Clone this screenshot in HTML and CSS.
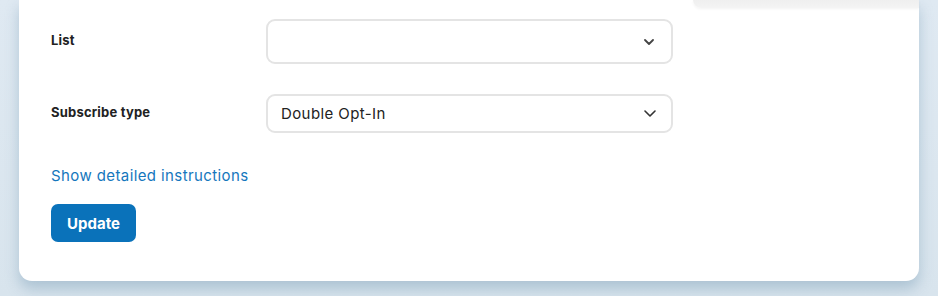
FILE: index.html
```html
<!DOCTYPE html>
<html>
<head>
<meta charset="utf-8">
<link rel="stylesheet" href="styles.css">
</head>
<body>
<div class="page">
  <div class="card">
    <div class="top-panel"></div>
    <div class="row row-list">
      <label class="label">List</label>
      <div class="select select-tall">
        <span class="value"></span>
        <svg class="chev" width="10" height="6" viewBox="0 0 10 6"><path d="M1 1l4 4 4-4" fill="none" stroke="#444" stroke-width="1.8" stroke-linecap="round" stroke-linejoin="round"/></svg>
      </div>
    </div>
    <div class="row row-type">
      <label class="label">Subscribe type</label>
      <div class="select">
        <span class="value">Double Opt-In</span>
        <svg class="chev" width="12" height="7" viewBox="0 0 12 7"><path d="M1 1l5 5 5-5" fill="none" stroke="#333" stroke-width="1.6" stroke-linecap="round" stroke-linejoin="round"/></svg>
      </div>
    </div>
    <a class="link" href="#">Show detailed instructions</a>
    <button class="btn">Update</button>
  </div>
</div>
</body>
</html>
```
FILE: styles.css
```css
html, body {
  margin: 0;
  padding: 0;
}
body {
  background: linear-gradient(180deg, #dfe9f2 0%, #d8e4ed 100%);
  font-family: "Inter", "Open Sans", sans-serif;
  width: 938px;
  height: 296px;
  overflow: hidden;
}
.page {
  padding: 0 19px;
}
.card {
  position: relative;
  background: #fff;
  border-radius: 0 0 13px 13px;
  padding: 19px 32px 39px 32px;
  height: 223px;
  box-shadow: 0 8px 14px rgba(120, 155, 180, 0.45);
  display: flex;
  flex-direction: column;
  align-items: flex-start;
}
.top-panel {
  position: absolute;
  top: 0;
  right: 0;
  width: 226px;
  height: 8px;
  background: linear-gradient(180deg, #efefef 0%, #f4f4f4 100%);
  border-bottom-left-radius: 12px;
  box-shadow: 0 1px 3px rgba(0, 0, 0, 0.05);
}
.row {
  display: flex;
  align-items: center;
}
.row-type {
  margin-top: 30px;
}
.label {
  width: 215px;
  font-size: 13px;
  font-weight: 700;
  color: #222;
  letter-spacing: 0.2px;
  margin-bottom: 3px;
}
.select {
  box-sizing: border-box;
  width: 407px;
  height: 39px;
  border: 2px solid #e4e4e4;
  border-radius: 9px;
  display: flex;
  align-items: center;
  justify-content: space-between;
  padding: 0 15px 0 13px;
}
.select-tall {
  height: 45px;
  padding-right: 17px;
}
.value {
  font-size: 15px;
  color: #222;
  letter-spacing: 0.4px;
}
.chev {
  display: block;
}
.link {
  margin-top: 31px;
  font-size: 15px;
  line-height: 24px;
  color: #1577bd;
  text-decoration: none;
  letter-spacing: 0.4px;
}
.btn {
  margin-top: 16px;
  width: 85px;
  height: 39px;
  border: none;
  border-radius: 7px;
  background: #0a72ba;
  color: #fff;
  font-family: inherit;
  font-size: 15px;
  font-weight: 700;
  padding: 0;
}
```
